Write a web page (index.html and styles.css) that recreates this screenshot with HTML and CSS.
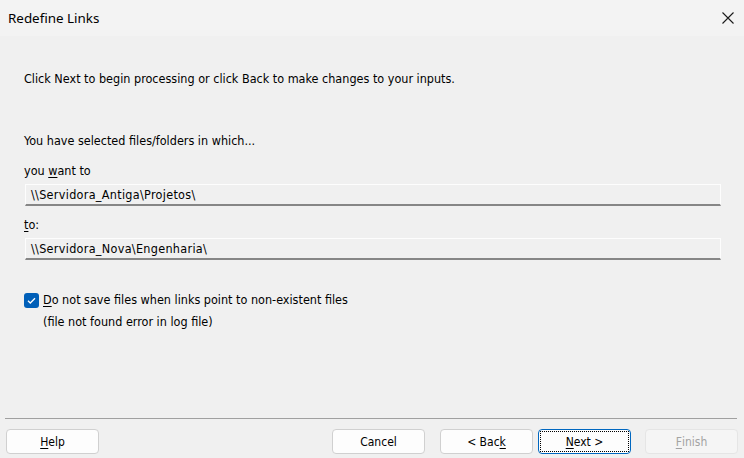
FILE: index.html
```html
<!DOCTYPE html>
<html>
<head>
<meta charset="utf-8">
<link rel="stylesheet" href="styles.css">
</head>
<body>
<div class="dialog">
  <div class="titlebar">
    <span class="title">Redefine Links</span>
    <svg class="close" width="12" height="12" viewBox="0 0 12 12"><path d="M0.5 0.5 L11.5 11.5 M11.5 0.5 L0.5 11.5" stroke="#1a1a1a" stroke-width="1.1" fill="none"/></svg>
  </div>
  <div class="content">
    <p class="intro">Click Next to begin processing or click Back to make changes to your inputs.</p>
    <p class="selected">You have selected files/folders in which...</p>
    <p class="label">you <u>w</u>ant to</p>
    <div class="field">\\Servidora_Antiga\Projetos\</div>
    <p class="label label2"><u>t</u>o:</p>
    <div class="field">\\Servidora_Nova\Engenharia\</div>
    <div class="check-row">
      <span class="checkbox"><svg width="15" height="15" viewBox="0 0 15 15"><path d="M4 7.8 L6.3 10 L11 5.2" stroke="#fff" stroke-width="1.3" fill="none"/></svg></span>
      <span><u>D</u>o not save files when links point to non-existent files</span>
    </div>
    <p class="note">(file not found error in log file)</p>
  </div>
  <div class="footer">
    <div class="sep"></div>
    <div class="buttons">
      <button class="btn"><u>H</u>elp</button>
      <div class="spacer"></div>
      <button class="btn">Cancel</button>
      <button class="btn btn-back">&lt; Bac<u>k</u></button>
      <button class="btn btn-next"><span class="focus"><u>N</u>ext &gt;</span></button>
      <button class="btn btn-disabled"><u>F</u>inish</button>
    </div>
  </div>
</div>
</body>
</html>
```

FILE: styles.css
```css
html, body {
  margin: 0;
  padding: 0;
  background: #f0f0f0;
}
.dialog {
  width: 744px;
  height: 458px;
  display: flex;
  flex-direction: column;
  font-family: "DejaVu Sans Condensed", "DejaVu Sans", sans-serif;
  font-size: 12px;
  color: #000;
  overflow: hidden;
}
.titlebar {
  height: 36px;
  background: #f3f3f3;
  display: flex;
  align-items: center;
  justify-content: space-between;
  padding: 0 10px 0 8px;
}
.title {
  font-family: "Noto Sans", "Open Sans", sans-serif;
  font-size: 13.4px;
  color: #000;
  margin-top: -1px;
}
.close {
  display: block;
}
.content {
  flex: 1;
  padding: 0 22px 0 24px;
  font-size: 12.5px;
}
p {
  margin: 0;
  line-height: 16px;
}
.intro {
  margin-top: 35px;
}
.selected {
  margin-top: 46px;
}
.label {
  margin-top: 14px;
}
.label2 {
  margin-top: 11px;
}
u {
  text-decoration: underline;
  text-underline-offset: 2px;
}
.field {
  margin-top: 5px;
  margin-left: 1px;
  line-height: 20px;
  padding-left: 5px;
  letter-spacing: 0.3px;
  background: #f0f0f0;
  border-top: 1px solid #fdfdfd;
  border-left: 1px solid #fdfdfd;
  border-right: 1px solid #fdfdfd;
  border-bottom: 2px solid #868686;
  box-sizing: content-box;
  width: 689px;
  height: 19px;
}
.check-row {
  margin-top: 32px;
  display: flex;
  align-items: center;
  gap: 4px;
  line-height: 16px;
}
.checkbox {
  width: 15px;
  height: 15px;
  border-radius: 3px;
  background: #005fb8;
  display: block;
}
.checkbox svg {
  display: block;
}
.note {
  margin-top: 6px;
  padding-left: 19px;
}
.footer {
  padding: 0 6px 4px 5px;
}
.sep {
  height: 1px;
  background: #a0a0a0;
  margin-right: 1px;
}
.buttons {
  display: flex;
  margin-top: 10px;
  padding-left: 1px;
}
.spacer {
  flex: 1;
}
.btn {
  width: 93px;
  height: 25px;
  box-sizing: border-box;
  background: #fdfdfd;
  border: 1px solid #d0d0d0;
  border-radius: 4px;
  font-family: "DejaVu Sans Condensed", "DejaVu Sans", sans-serif;
  font-size: 12px;
  color: #000;
  padding: 0;
  display: flex;
  align-items: center;
  justify-content: center;
}
.btn-back {
  margin-left: 15px;
}
.btn-next {
  margin-left: 5px;
  border: 1px solid #0067c0;
  padding: 1px;
}
.btn-disabled {
  margin-left: 14px;
  background: #f5f5f5;
  border-color: #e5e5e5;
  color: #a3a3a3;
}
.focus {
  flex: 1;
  align-self: stretch;
  border: 1px dotted #000;
  display: flex;
  align-items: center;
  justify-content: center;
}
```
